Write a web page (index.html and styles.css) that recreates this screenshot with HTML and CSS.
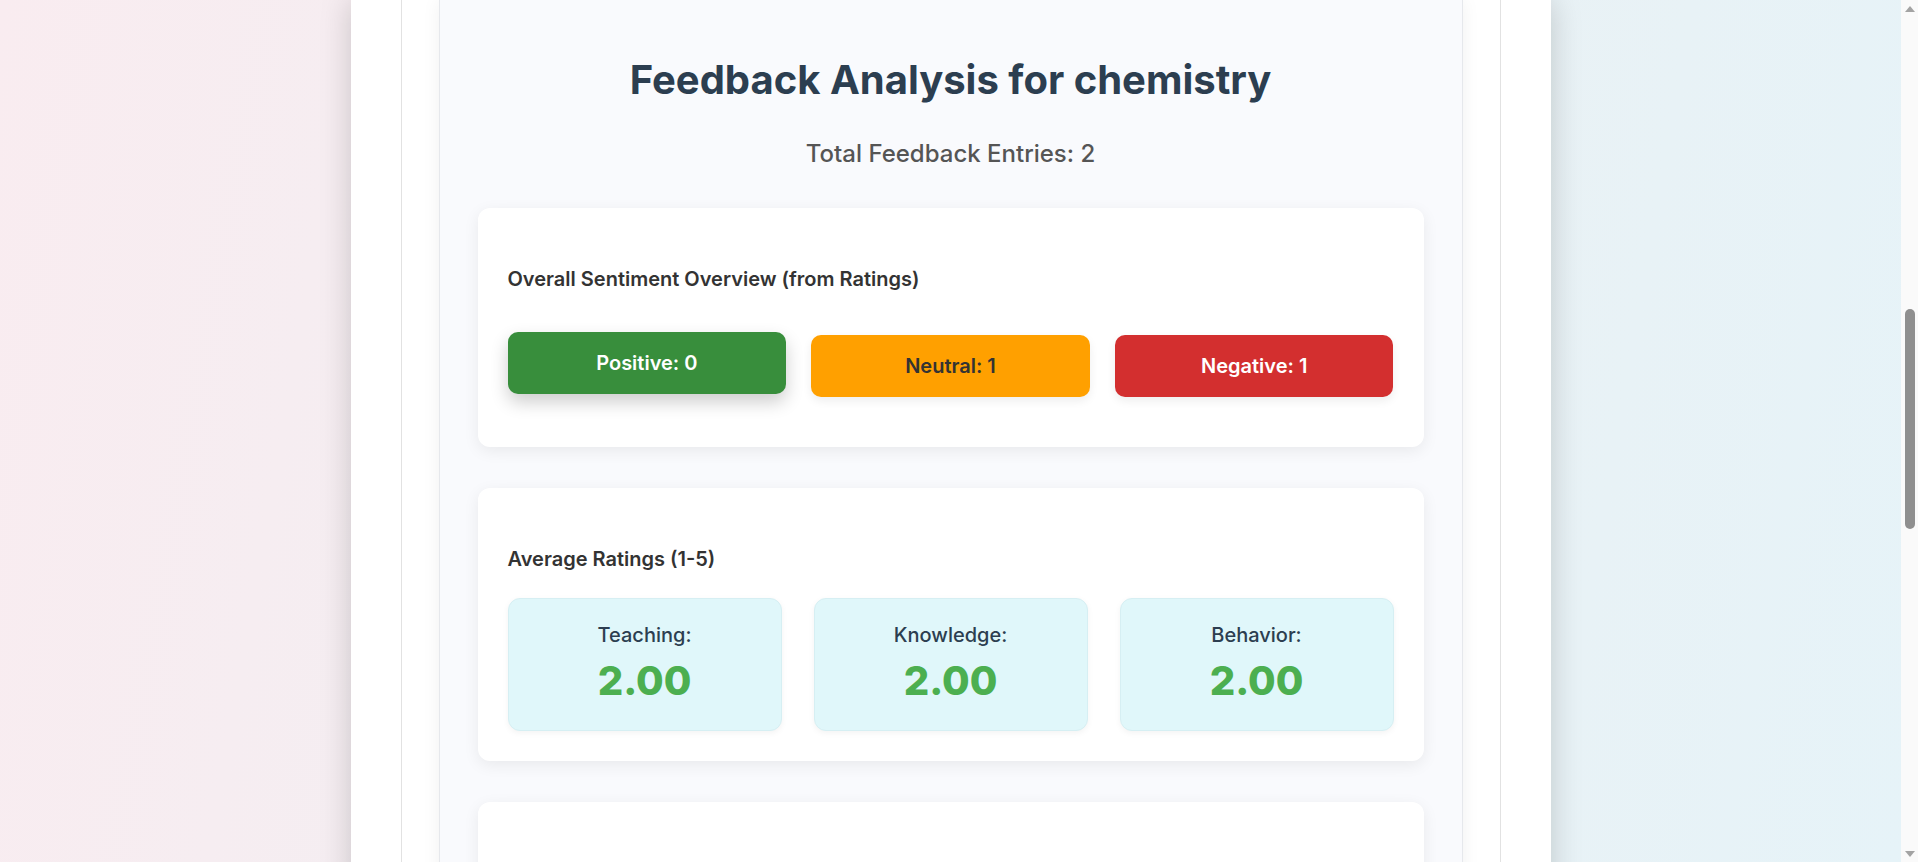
FILE: index.html
```html
<!DOCTYPE html>
<html lang="en">
<head>
<meta charset="utf-8">
<title>Feedback Analysis</title>
<link rel="stylesheet" href="styles.css">
</head>
<body>
<div class="viewport">
  <div class="page">
    <div class="frame">
      <main class="panel">
        <h1 class="title">Feedback Analysis for chemistry</h1>
        <p class="total">Total Feedback Entries: 2</p>

        <section class="card">
          <h3 class="card-title">Overall Sentiment Overview (from Ratings)</h3>
          <div class="sentiment-row">
            <div class="sentiment positive is-hover">Positive: 0</div>
            <div class="sentiment neutral">Neutral: 1</div>
            <div class="sentiment negative">Negative: 1</div>
          </div>
        </section>

        <section class="card">
          <h3 class="card-title">Average Ratings (1-5)</h3>
          <div class="ratings-row">
            <div class="rating">
              <div class="rating-label">Teaching:</div>
              <div class="rating-value">2.00</div>
            </div>
            <div class="rating">
              <div class="rating-label">Knowledge:</div>
              <div class="rating-value">2.00</div>
            </div>
            <div class="rating">
              <div class="rating-label">Behavior:</div>
              <div class="rating-value">2.00</div>
            </div>
          </div>
        </section>

        <section class="card">
          <h3 class="card-title">Comment Sentiment Breakdown</h3>
          <div class="placeholder"></div>
        </section>
      </main>
    </div>
  </div>
</div>
<div class="scrollbar">
  <div class="sb-arrow"><svg width="10" height="6" viewBox="0 0 10 6"><path d="M0 6 L5 0 L10 6 Z" fill="#a3a3a3"/></svg></div>
  <div class="sb-track"><div class="sb-thumb"></div></div>
  <div class="sb-arrow"><svg width="10" height="6" viewBox="0 0 10 6"><path d="M0 0 L5 6 L10 0 Z" fill="#a3a3a3"/></svg></div>
</div>
</body>
</html>
```
FILE: styles.css
```css
html, body {
  margin: 0;
  height: 100%;
  overflow: hidden;
}
body {
  display: flex;
  font-family: Inter, "Noto Sans", "Liberation Sans", sans-serif;
  color: #333;
}
.viewport {
  flex: 1;
  display: flex;
  justify-content: center;
  align-items: flex-start;
  overflow: hidden;
  background: linear-gradient(100deg, #f9ecf0 0%, #f3eef2 35%, #eaf1f4 65%, #e6f3f8 100%);
}
.page {
  width: 1200px;
  flex-shrink: 0;
  box-sizing: border-box;
  padding: 0 50px;
  background: #fff;
  box-shadow: 0 0 30px rgba(0, 0, 0, 0.18);
  min-height: 1400px;
}
.frame {
  border-left: 1px solid #e2e2e2;
  border-right: 1px solid #e2e2e2;
  padding: 0 37px;
  min-height: 1400px;
}
.panel {
  display: block;
  background: #f9fafd;
  border-left: 1px solid #e6e8ec;
  border-right: 1px solid #e6e8ec;
  box-shadow: 0 0 18px rgba(0, 0, 0, 0.06);
  padding: 56px 38px 40px;
  min-height: 1300px;
}
.title {
  margin: 0;
  text-align: center;
  font-size: 40px;
  line-height: 48px;
  font-weight: 700;
  color: #2c3e50;
}
.total {
  margin: 36px 0 40px;
  text-align: center;
  font-size: 24px;
  line-height: 28px;
  font-weight: 500;
  color: #555;
}
.card {
  background: #fff;
  border-radius: 12px;
  box-shadow: 0 4px 16px rgba(0, 0, 0, 0.07);
  padding: 30px;
  margin-bottom: 41px;
}
.card-title {
  margin: 29px 0 0;
  font-size: 20px;
  line-height: 24px;
  font-weight: 600;
  color: #333;
}
.sentiment-row {
  display: grid;
  grid-template-columns: repeat(3, 1fr);
  gap: 25px;
  margin: 44px 0 20px;
}
.sentiment {
  height: 62px;
  border-radius: 10px;
  display: flex;
  align-items: center;
  justify-content: center;
  font-size: 20px;
  font-weight: 600;
  box-shadow: 0 4px 10px rgba(0, 0, 0, 0.07);
}
.positive { background: #388e3c; color: #fff; }
.neutral { background: #ffa000; color: #333; }
.negative { background: #d32f2f; color: #fff; }
.is-hover {
  transform: translateY(-3px);
  box-shadow: 0 8px 18px rgba(0, 0, 0, 0.2);
}
.ratings-row {
  display: grid;
  grid-template-columns: repeat(3, 1fr);
  gap: 32px;
  margin-top: 27px;
}
.rating {
  background: #e0f7fa;
  border: 1px solid #d6eff3;
  border-radius: 12px;
  box-shadow: 0 2px 6px rgba(0, 0, 0, 0.05);
  padding: 24px 20px 25px;
  text-align: center;
}
.rating-label {
  font-size: 20px;
  line-height: 24px;
  font-weight: 500;
  color: #2c3e50;
}
.rating-value {
  margin-top: 10px;
  font-size: 40px;
  line-height: 48px;
  font-weight: 800;
  color: #4caf50;
}
.placeholder {
  height: 200px;
}
.scrollbar {
  width: 17px;
  flex-shrink: 0;
  display: flex;
  flex-direction: column;
  background: #fafafa;
}
.sb-arrow {
  height: 17px;
  display: flex;
  align-items: center;
  justify-content: center;
}
.sb-track {
  flex: 1;
}
.sb-thumb {
  margin: 292px 0 0 4px;
  width: 10px;
  height: 220px;
  border-radius: 5px;
  background: #8f8f8f;
}
```
